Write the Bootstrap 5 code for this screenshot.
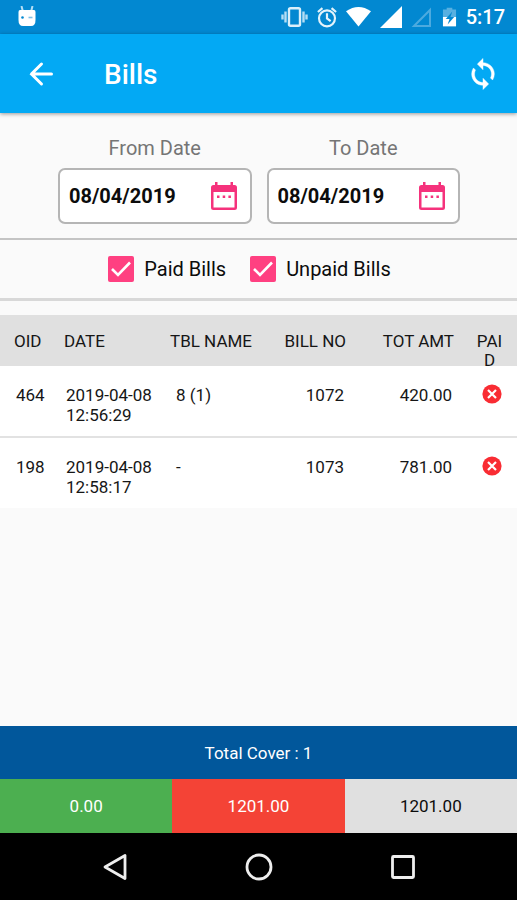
<!DOCTYPE html>
<html lang="en">
<head>
<meta charset="utf-8">
<meta name="viewport" content="width=device-width, initial-scale=1">
<title>Bills</title>
<link href="https://cdn.jsdelivr.net/npm/bootstrap@5.3.0/dist/css/bootstrap.min.css" rel="stylesheet">
<style>
  body { font-family: Roboto, "Liberation Sans", sans-serif; font-size: 20px; line-height: 24px; background: #fafafa; color: #0c0c0c; }
  svg { display: block; flex: none; }
  .status-bar { background: #0288d1; height: 34px; padding-right: 12px; padding-left: 17px; }
  .status-icons { gap: 9px; }
  .clock { font-weight: 500; color: #fff; }
  .app-bar { background: #03a9f4; height: 79px; padding: 2px 17px 0 24px; box-shadow: 0 1px 4px rgba(0,0,0,.4); }
  .app-bar h1 { font-size: 28px; line-height: 32px; font-weight: 500; margin-left: 46px; }
  .dates { gap: 15px; padding: 23px 57px 14px 58px; border-bottom: 2px solid #c4c4c4; }
  .dates label { color: #757575; margin-bottom: 8px; }
  .date-box { border: 2px solid #b5b5b5; border-radius: 7px; background: #fff; height: 56px; padding-left: 9px; padding-right: 9px; }
  .date-box input { font-weight: 700; color: #0c0c0c; line-height: 24px; min-width: 0; outline: 0; }
  .filter-bar { border-bottom: 3px solid #d8d8d8; padding: 16px 18px 16px 0; gap: 24px; }
  .filter-item { gap: 10px; }
  .filter-bar .form-check-input { width: 26px; height: 26px; border-radius: 2px; margin: 0; float: none; border: 0; }
  .filter-bar .form-check-input:checked { background-color: #ff4081; background-size: 26px; background-image: url("data:image/svg+xml,%3csvg xmlns='http://www.w3.org/2000/svg' viewBox='0 0 26 26'%3e%3cpath fill='none' stroke='%23fff' stroke-width='2.6' d='M4 13l6 6L22 6.500'/%3e%3c/svg%3e"); }
  .bills { margin-top: 14px; table-layout: fixed; font-size: 17px; line-height: 20px; color: #161616; }
  .bills th { background: #e0e0e0; font-weight: 400; line-height: 19px; padding: 17px 8px 0; }
  .bills th div { height: 34px; }
  .bills td { background: #fff; padding: 19px 10px 11px; vertical-align: top; border-bottom: 2px solid #e2e2e2; }
  .bills tr:last-child td { border-bottom: 0; }
  .bills th:first-child { padding-left: 14px; padding-right: 0; }
  .bills td:first-child { padding-left: 16px; padding-right: 0; }
  .bills td:nth-child(3) { padding-left: 14px; }
  .bills .paid-head { word-break: break-all; padding-left: 10px; padding-right: 10px; }
  .bills .paid-cell { padding: 18px 15px 0 20px; }
  .col-oid { width: 56px; } .col-date { width: 106px; } .col-bill { width: 86px; } .col-total { width: 108px; } .col-paid { width: 55px; }
  .totals { font-size: 17px; line-height: 20px; }
  .totals .cover { background: #01579b; color: #fff; padding: 17px 0 16px; }
  .totals .sum { padding: 17px 0; }
  .sum-paid { background: #4caf50; color: #fff; } .sum-unpaid { background: #f44336; color: #fff; } .sum-all { background: #e0e0e0; }
  .nav-keys { background: #000; height: 67px; gap: 112px; }
</style>
<script src="https://cdn.jsdelivr.net/npm/bootstrap@5.3.0/dist/js/bootstrap.bundle.min.js"></script>
</head>
<body class="d-flex flex-column min-vh-100">
<svg width="0" height="0" class="position-absolute" aria-hidden="true">
  <symbol id="calendar" viewBox="0 0 28 30"><path fill="#f5327c" fill-rule="evenodd" d="M5 1h2.500v3h13V1H23v3h1.500a2.500 2.500 0 0 1 2.500 2.500v20a2.500 2.500 0 0 1-2.500 2.500h-21A2.500 2.500 0 0 1 1 26.500v-20A2.500 2.500 0 0 1 3.500 4H5zM3.500 11v15.500h21V11zM7 14.500h2.500V17H7zm5.700 0h2.500V17h-2.500zm5.700 0h2.500V17h-2.500z"/></symbol>
  <symbol id="unpaid" viewBox="0 0 20 20"><circle cx="10" cy="10" r="9.600" fill="#f92c33"/><path stroke="#fff" stroke-width="2.200" d="M6 6l8 8M14 6l-8 8"/></symbol>
</svg>

<div class="status-bar d-flex align-items-center justify-content-between">
  <svg width="20" height="22" viewBox="0 0 20 22" aria-hidden="true"><path d="M6 6L4.500 0M14 6l1.500-6" stroke="#b5def4" stroke-width="2"/><path fill="#fff" d="M3 4h14q1.500 0 1.500 2v8q0 6-4.500 6H6q-4.500 0-4.500-6V6q0-2 1.500-2z"/><circle cx="5.500" cy="11.500" r="1.300" fill="#0288d1"/><path d="M11.500 11.500h4" stroke="#7fc0e6" stroke-width="1.600"/></svg>
  <div class="status-icons d-flex align-items-center">
    <svg width="27" height="22" viewBox="0 0 27 22" aria-hidden="true"><rect x="8" y="2.200" width="11" height="17.600" rx="1.500" fill="none" stroke="#d9effa" stroke-width="2.400"/><path d="M4.500 5.500v11M1.500 8.500v5M22.500 5.500v11M25.500 8.500v5" stroke="#b5def4" stroke-width="2.400"/></svg>
    <svg width="20" height="22" viewBox="0 0 22 22" aria-hidden="true"><g fill="none" stroke="#e3f3fb" stroke-width="2.400"><circle cx="11" cy="12.500" r="8.800"/><path d="M11 7v5.500l4 3M1 5.500L6 1.300M21 5.500L16 1.300"/></g></svg>
    <svg width="25" height="22" viewBox="0 0 26 22" aria-hidden="true"><path fill="#fff" d="M0 5q13-9 26 0L13 21z"/></svg>
    <svg width="22" height="22" viewBox="0 0 22 22" aria-hidden="true"><path fill="#fff" d="M0 22L22 0v22z"/></svg>
    <svg width="22" height="22" viewBox="0 0 22 22" aria-hidden="true"><path fill="none" stroke="#4caadf" stroke-width="2" d="M3 20L19 4v16z"/></svg>
    <svg width="15" height="22" viewBox="0 0 16 22" aria-hidden="true"><path fill="#57b0e1" d="M5 1h6v2h4v8H1V3h4z"/><path fill="#fff" d="M1 11h14v10H1z"/><path fill="#0288d1" d="M11 5l-7 8h4l-2 6 7-8H9z"/></svg>
    <span class="clock">5:17</span>
  </div>
</div>

<header class="app-bar d-flex align-items-center">
  <button class="btn p-0 border-0" type="button" aria-label="Back"><svg width="34" height="34" viewBox="0 0 34 34"><path fill="none" stroke="#fff" stroke-width="3" stroke-linecap="round" d="M27.500 16H7.500M17.500 6l-10 10 10 10"/></svg></button>
  <h1 class="text-white mb-0">Bills</h1>
  <button class="btn p-0 border-0 ms-auto" type="button" aria-label="Refresh"><svg width="34" height="34" viewBox="0 .7 24 24"><path fill="#fff" stroke="#fff" stroke-width=".3" d="M12 4V1L8 5l4 4V6c3.310 0 6 2.690 6 6 0 1.010-.25 1.970-.7 2.800l1.460 1.460A7.930 7.930 0 0 0 20 12c0-4.420-3.580-8-8-8zm0 14c-3.310 0-6-2.690-6-6 0-1.010.25-1.970.7-2.800L5.240 7.740A7.930 7.930 0 0 0 4 12c0 4.420 3.580 8 8 8v3l4-4-4-4z"/></svg></button>
</header>

<main class="flex-grow-1">
  <div class="dates d-flex">
    <div class="flex-fill d-flex flex-column text-center">
      <label for="from">From Date</label>
      <div class="date-box d-flex align-items-center">
        <input id="from" type="text" class="border-0 bg-transparent p-0 w-100" value="08/04/2019">
        <button class="btn p-0 border-0" type="button" aria-label="Pick from date"><svg width="34" height="30"><use href="#calendar"/></svg></button>
      </div>
    </div>
    <div class="flex-fill d-flex flex-column text-center">
      <label for="to">To Date</label>
      <div class="date-box d-flex align-items-center">
        <input id="to" type="text" class="border-0 bg-transparent p-0 w-100" value="08/04/2019">
        <button class="btn p-0 border-0" type="button" aria-label="Pick to date"><svg width="34" height="30"><use href="#calendar"/></svg></button>
      </div>
    </div>
  </div>

  <div class="filter-bar d-flex justify-content-center">
    <div class="filter-item d-flex align-items-center">
      <input class="form-check-input" type="checkbox" id="paid" checked>
      <label for="paid">Paid Bills</label>
    </div>
    <div class="filter-item d-flex align-items-center">
      <input class="form-check-input" type="checkbox" id="unpaidBills" checked>
      <label for="unpaidBills">Unpaid Bills</label>
    </div>
  </div>

  <table class="bills w-100">
    <colgroup><col class="col-oid"><col class="col-date"><col><col class="col-bill"><col class="col-total"><col class="col-paid"></colgroup>
    <thead>
      <tr>
        <th scope="col"><div>OID</div></th>
        <th scope="col"><div>DATE</div></th>
        <th scope="col"><div>TBL NAME</div></th>
        <th scope="col" class="text-end"><div>BILL NO</div></th>
        <th scope="col" class="text-end"><div>TOT AMT</div></th>
        <th scope="col" class="paid-head text-center"><div>PAID</div></th>
      </tr>
    </thead>
    <tbody>
      <tr>
        <td>464</td><td>2019-04-08<br>12:56:29</td><td>8 (1)</td><td class="text-end">1072</td><td class="text-end">420.00</td>
        <td class="paid-cell"><svg width="20" height="20" role="img" aria-label="Not paid"><use href="#unpaid"/></svg></td>
      </tr>
      <tr>
        <td>198</td><td>2019-04-08<br>12:58:17</td><td>-</td><td class="text-end">1073</td><td class="text-end">781.00</td>
        <td class="paid-cell"><svg width="20" height="20" role="img" aria-label="Not paid"><use href="#unpaid"/></svg></td>
      </tr>
    </tbody>
  </table>
</main>

<footer>
  <div class="totals text-center">
    <div class="cover">Total Cover : 1</div>
    <div class="row g-0">
      <div class="col sum sum-paid">0.00</div>
      <div class="col sum sum-unpaid">1201.00</div>
      <div class="col sum sum-all">1201.00</div>
    </div>
  </div>
  <div class="nav-keys d-flex align-items-center justify-content-center">
    <button class="btn p-0 border-0" type="button" aria-label="Back key"><svg width="32" height="32" viewBox="0 0 32 32"><path fill="none" stroke="#eee" stroke-width="2.800" stroke-linejoin="round" d="M26 4.500v23L6 16z"/></svg></button>
    <button class="btn p-0 border-0" type="button" aria-label="Home key"><svg width="32" height="32" viewBox="0 0 32 32"><circle cx="16" cy="16" r="12" fill="none" stroke="#eee" stroke-width="2.800"/></svg></button>
    <button class="btn p-0 border-0" type="button" aria-label="Overview key"><svg width="32" height="32" viewBox="0 0 32 32"><rect x="5.500" y="5.500" width="21" height="21" rx="1" fill="none" stroke="#eee" stroke-width="2.800"/></svg></button>
  </div>
</footer>
</body>
</html>
